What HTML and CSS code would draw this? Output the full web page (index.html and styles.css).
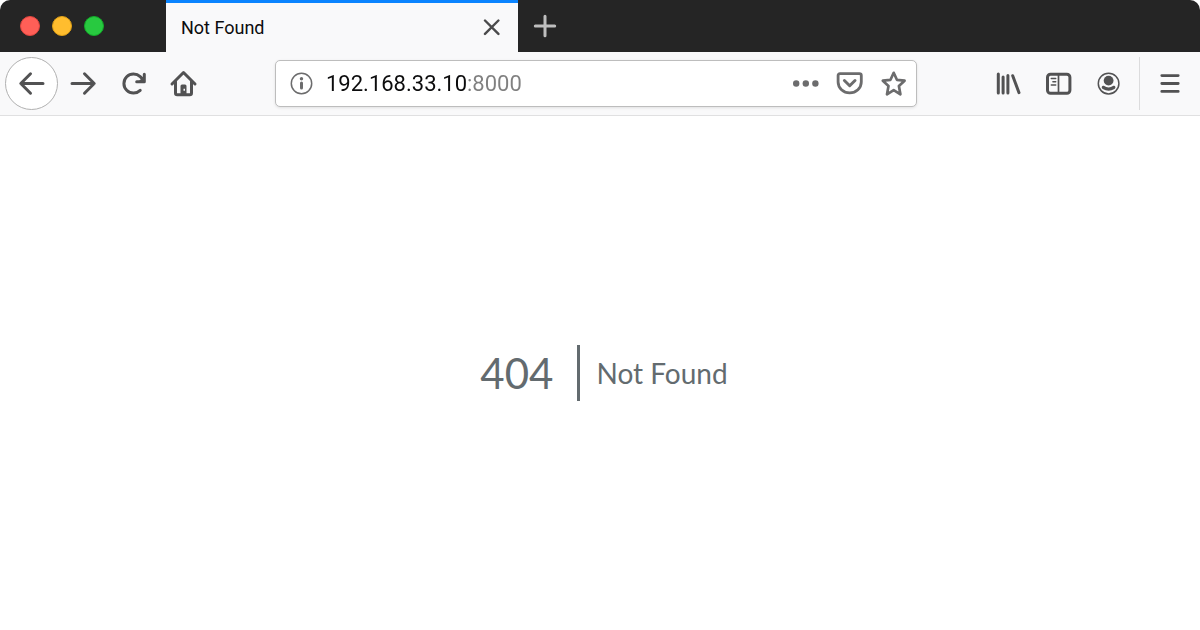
FILE: index.html
```html
<!DOCTYPE html>
<html lang="en">
  <head>
    <meta charset="UTF-8" />
    <meta name="viewport" content="width=device-width, initial-scale=1.0" />
    <title>Not Found</title>
    <link rel="stylesheet" href="styles.css">
  </head>
  <body>
    <header class="browser">
      <div class="titlebar">
        <div class="lights">
          <button class="light red" aria-label="Close window"></button>
          <button class="light yellow" aria-label="Minimize window"></button>
          <button class="light green" aria-label="Zoom window"></button>
        </div>
        <div class="tab">
          <span class="tab-title">Not Found</span>
          <button class="tab-close" aria-label="Close tab">
            <svg width="18" height="18" viewBox="0 0 18 18"><path d="M2 1.5l13.4 13.4M15.4 1.5L2 14.9" stroke-width="2.4" /></svg>
          </button>
        </div>
        <button class="new-tab" aria-label="New tab">
          <svg width="24" height="24" viewBox="0 0 24 24"><path d="M12 2.3v19.4M2.3 12h19.4" stroke-width="3" /></svg>
        </button>
      </div>

      <nav class="toolbar">
        <button class="tool back" aria-label="Back">
          <svg width="32" height="32" viewBox="0 0 32 32"><path d="M27 15.5H5M14.5 5.8L4.8 15.5l9.7 9.7" stroke-width="3" /></svg>
        </button>
        <button class="tool" aria-label="Forward">
          <svg width="32" height="32" viewBox="0 0 32 32"><path d="M5 15.5h22M17.5 5.8l9.7 9.7-9.7 9.7" stroke-width="3" /></svg>
        </button>
        <button class="tool" aria-label="Reload">
          <svg width="32" height="32" viewBox="0 0 32 32">
            <path d="M23.2 22.4A9.6 9.6 0 1 1 23.2 8.6l2 2" stroke-width="3" />
            <path d="M27.3 6.2v7.6h-7.6" stroke-width="3" />
            <path class="solid" d="M21.5 13.5l5-5v5z" />
          </svg>
        </button>
        <button class="tool" aria-label="Home">
          <svg width="32" height="32" viewBox="0 0 32 32">
            <path d="M5 16L16.5 4.5 28 16M8.5 13.5v11.5q0 1.7 1.7 1.7h12.6q1.7 0 1.7-1.7V13.5" stroke-width="3" />
            <path class="solid" fill-rule="evenodd" d="M13.5 26.5V18q0-1.5 1.5-1.5h3q1.5 0 1.5 1.5v8.5zM16.5 20.7h1.5v2h-1.5z" />
          </svg>
        </button>

        <form class="urlbar">
          <button class="url-info" type="button" aria-label="Site information">
            <svg width="24" height="24" viewBox="0 0 24 24">
              <circle cx="11.5" cy="11.5" r="10.2" stroke-width="1.5" />
              <circle class="solid" cx="11.5" cy="6.7" r="1.7" />
              <path d="M11.5 11v5" stroke-width="3" />
            </svg>
          </button>
          <input class="url-input" type="text" aria-label="Address" value="192.168.33.10:8000" />
          <button class="url-action" type="button" aria-label="Page actions">
            <svg width="28" height="28" viewBox="0 0 28 28">
              <circle class="solid" cx="4.2" cy="13.5" r="3.2" />
              <circle class="solid" cx="13.8" cy="13.5" r="3.2" />
              <circle class="solid" cx="23.4" cy="13.5" r="3.2" />
            </svg>
          </button>
          <button class="url-action" type="button" aria-label="Save to Pocket">
            <svg width="28" height="28" viewBox="0 0 28 28">
              <path d="M4 3.7h19.4q1.9 0 1.9 1.9v6.5a11.6 10.8 0 0 1-23.2 0V5.6q0-1.9 1.9-1.9z" stroke-width="2.8" />
              <path d="M8.4 10.5l5.3 5.2 5.3-5.2" stroke-width="3" />
            </svg>
          </button>
          <button class="url-action" type="button" aria-label="Bookmark this page">
            <svg width="28" height="28" viewBox="0 0 28 28">
              <path d="M13.7 2.8l3.2 7 7.7.9-5.7 5.2 1.5 8.4-6.7-4.2-6.7 4.2 1.5-8.4-5.7-5.2 7.7-.9z" stroke-width="2.7" />
            </svg>
          </button>
        </form>

        <button class="tool" aria-label="Library">
          <svg width="32" height="32" viewBox="0 0 32 32"><path d="M6.3 6.1v18.8M11.1 9.1v15.8M15.9 7.5v17.4M20.7 7.7l6.3 17" stroke-width="3" /></svg>
        </button>
        <button class="tool" aria-label="Sidebar">
          <svg width="32" height="32" viewBox="0 0 32 32">
            <rect x="5.5" y="6.2" width="22.4" height="19" rx="3" stroke-width="3" />
            <path d="M16.5 7v18" stroke-width="1.7" />
            <path d="M9.3 10.5h4.4M10.9 13.8h2.8M9.3 17h4.4" stroke-width="1.5" />
          </svg>
        </button>
        <button class="tool" aria-label="Account">
          <svg width="32" height="32" viewBox="0 0 32 32">
            <circle cx="16.6" cy="15.6" r="10.3" stroke-width="1.5" />
            <circle class="solid" cx="16.6" cy="12.6" r="4.9" />
            <path class="solid" d="M11.8 17.8q4.8 3.2 9.6 0c2.4 0 2.6 2 1.1 3.2q-5.9 3.6-11.8 0c-1.5-1.2-1.3-3.2 1.1-3.2z" />
          </svg>
        </button>
        <button class="tool menu" aria-label="Open menu">
          <svg width="32" height="32" viewBox="0 0 32 32"><path d="M7.8 7.6h16.4M7.8 15.5h16.4M7.8 23.4h16.4" stroke-width="2.8" /></svg>
        </button>
      </nav>
    </header>

    <main class="error">
      <h1 class="code">404</h1>
      <p class="message">Not Found</p>
    </main>
  </body>
</html>
```

FILE: styles.css
```css
body {
  margin: 0;
  min-height: 100vh;
  display: flex;
  flex-direction: column;
  background-color: #fff;
  font-family: Roboto, sans-serif;
}

button {
  padding: 0;
  border: none;
  background: none;
  color: inherit;
  display: flex;
  justify-content: center;
  align-items: center;
}

svg {
  fill: none;
  stroke: currentColor;
  stroke-linecap: round;
  stroke-linejoin: round;
}

.solid {
  fill: currentColor;
  stroke: none;
}

.titlebar {
  height: 52px;
  display: flex;
  background-color: #252525;
  border-radius: 10px 10px 0 0;
}

.lights {
  width: 166px;
  box-sizing: border-box;
  padding-left: 20px;
  display: flex;
  align-items: center;
  gap: 12px;
}

.light {
  width: 20px;
  height: 20px;
  border-radius: 50%;
}

.red {
  background-color: #ff5f57;
  border: 1px solid #e2463f;
}

.yellow {
  background-color: #ffbd2e;
  border: 1px solid #e1a116;
}

.green {
  background-color: #28c940;
  border: 1px solid #12ac28;
}

.tab {
  width: 352px;
  box-sizing: border-box;
  padding: 0 17px 0 15px;
  display: flex;
  justify-content: space-between;
  align-items: center;
  background-color: #f9f9fa;
  border-top: 3px solid #0a84ff;
}

.tab-title {
  font-size: 18px;
  line-height: 24px;
  color: #0c0c0d;
}

.tab-close {
  color: #4a4a4b;
}

.new-tab {
  width: 53px;
  color: #bebebe;
}

.toolbar {
  height: 63px;
  padding-left: 5px;
  display: flex;
  align-items: center;
  background-color: #f9f9fa;
  border-bottom: 1px solid #e0e0e1;
  color: #525253;
}

.tool {
  width: 50px;
  height: 53px;
}

.back {
  width: 53px;
  box-sizing: border-box;
  border: 1px solid #b1b1b1;
  border-radius: 50%;
  background-color: #fff;
}

.menu {
  width: 61px;
  margin-left: 6px;
  border-left: 1px solid #dcdcdd;
}

.urlbar {
  flex: 1;
  min-width: 0;
  height: 47px;
  box-sizing: border-box;
  margin: 0 66px 0 67px;
  padding: 0 8px 0 14px;
  display: flex;
  align-items: center;
  gap: 16px;
  background-color: #fff;
  border: 1px solid #bdbdbd;
  border-radius: 5px;
  box-shadow: 0 1px 3px rgba(0, 0, 0, 0.1);
  color: #6c6c6d;
}

/* host is dark, port is dimmed */
.url-input {
  flex: 1;
  min-width: 0;
  height: 32px;
  padding: 0;
  margin-left: -4px;
  border: none;
  outline: none;
  background: linear-gradient(to right, #0c0c0d 140px, #808080 140px);
  -webkit-background-clip: text;
  background-clip: text;
  -webkit-text-fill-color: transparent;
  font-family: inherit;
  font-size: 22px;
}

.error {
  flex: 1;
  display: flex;
  justify-content: center;
  align-items: center;
  font-family: Lato, sans-serif;
  color: #636b6f;
}

.code {
  margin: 0;
  padding: 0 24px;
  border-right: 3px solid #636b6f;
  font-size: 42px;
  font-weight: 400;
  line-height: 56px;
}

.message {
  margin: 0;
  padding: 0 16px;
  font-size: 28px;
  line-height: 32px;
}
```
